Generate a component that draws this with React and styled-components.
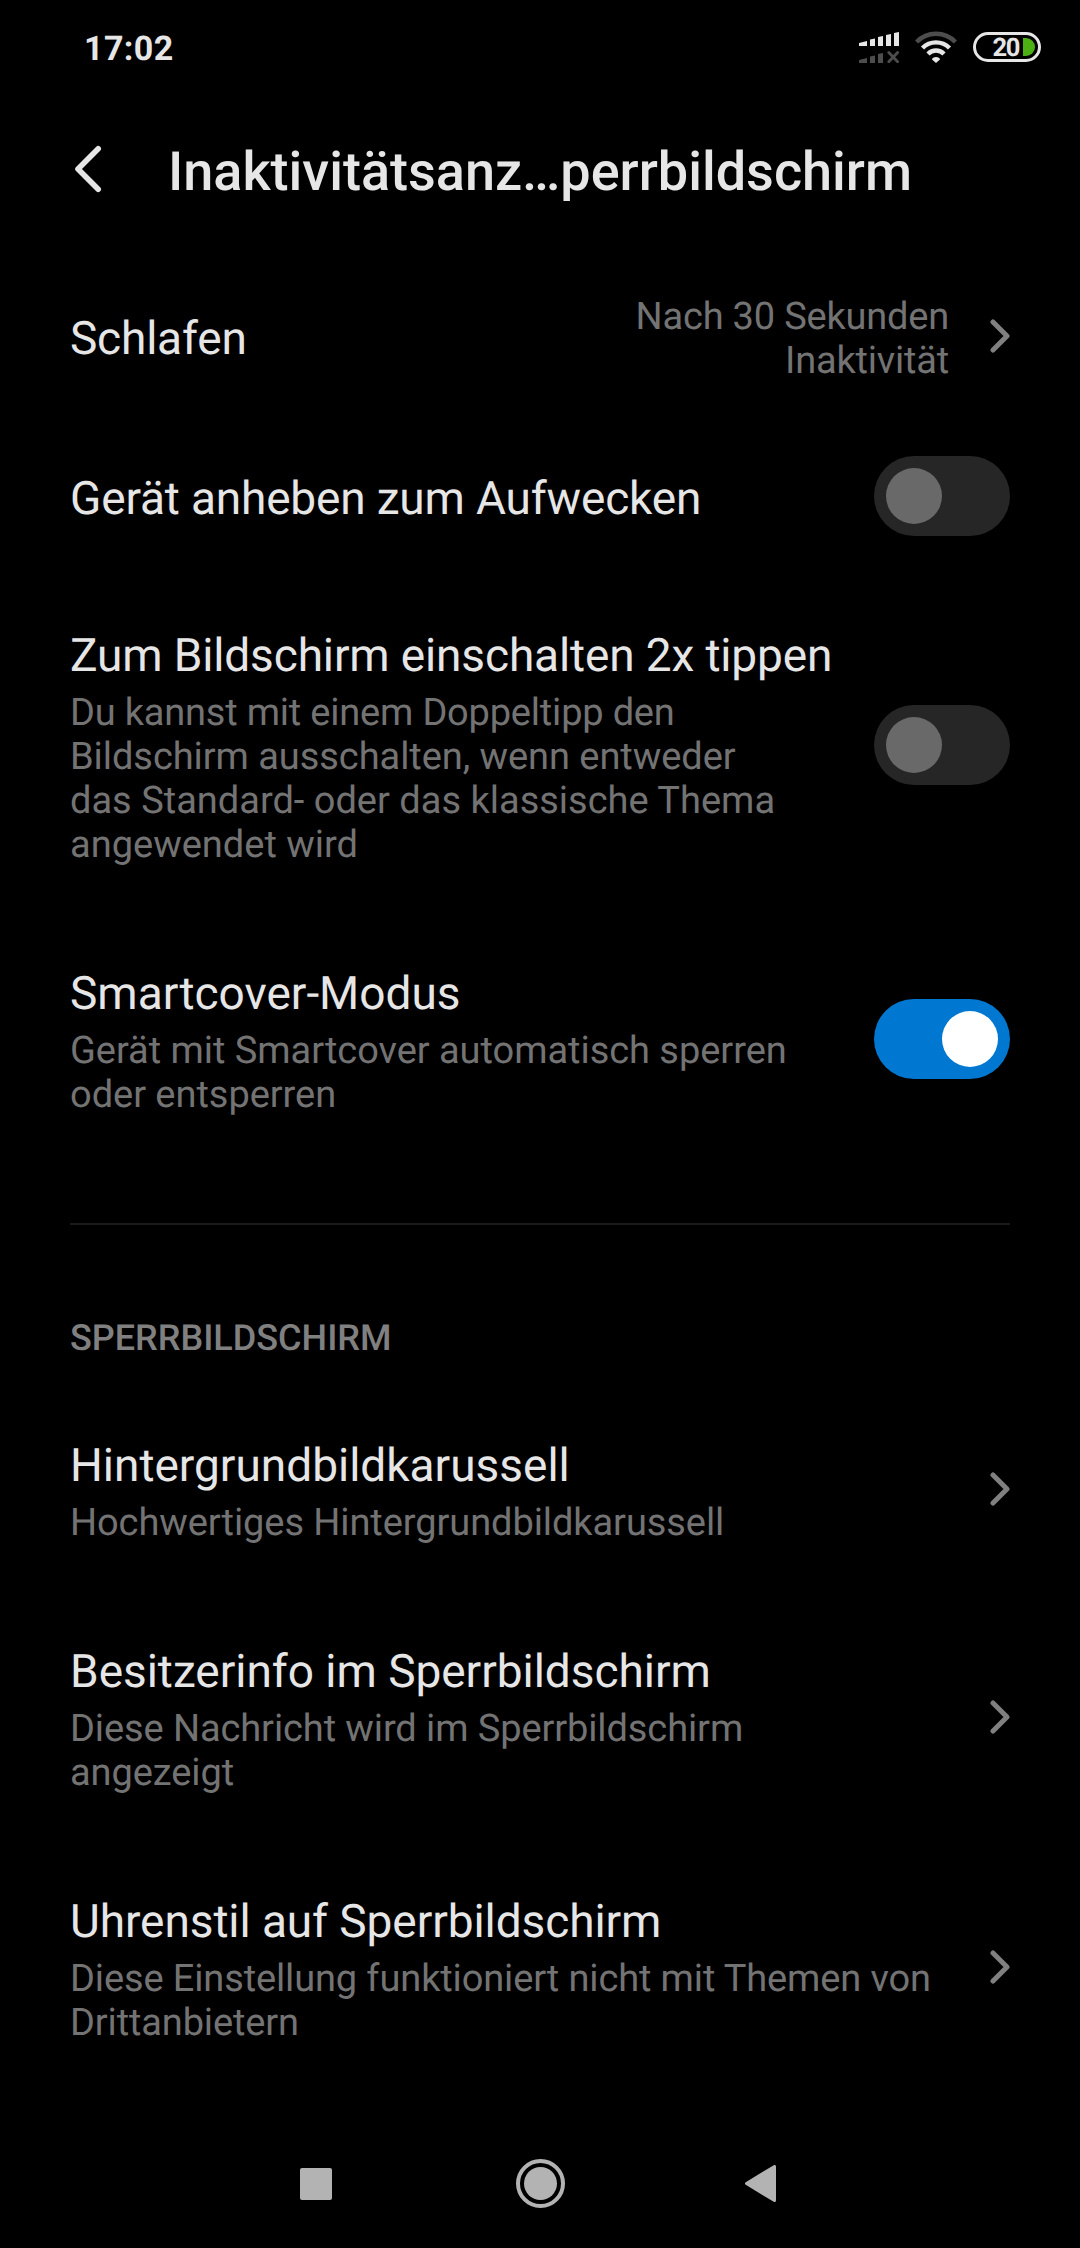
import React from 'react'
import styled, { createGlobalStyle } from 'styled-components'

const GlobalStyle = createGlobalStyle`
  body {
    margin: 0;
    background: #000;
    font-family: Roboto, sans-serif;
    text-rendering: geometricPrecision;
  }
`

const Screen = styled.div`
  display: flex;
  flex-direction: column;
  width: 1080px;
  height: 2248px;
  overflow: hidden;
  background: #000;
  color: #e6e6e6;
`

const StatusBar = styled.header`
  display: flex;
  align-items: center;
  justify-content: space-between;
  height: 96px;
  padding: 0 39px 2px 84px;
  box-sizing: border-box;
`

const Clock = styled.time`
  padding-top: 3px;
  font-size: 34px;
  font-weight: 700;
  letter-spacing: 0.4px;
`

const StatusIcons = styled.div`
  display: flex;
  align-items: center;
  gap: 16px;
`

const TitleBar = styled.div`
  display: flex;
  align-items: center;
  height: 152px;
  padding-left: 74px;
  gap: 66px;

  svg {
    margin-bottom: 6px;
  }
`

const Title = styled.h1`
  margin: 0;
  padding-top: 2px;
  font-size: 54px;
  font-weight: 500;
  line-height: 64px;
`

const List = styled.main`
  flex: 1;
  padding: 0 70px;
`

const Row = styled.div`
  display: flex;
  align-items: center;
  justify-content: space-between;
  box-sizing: border-box;
  height: ${({ $height }) => $height}px;
`

const Texts = styled.div`
  padding-top: 6px;
`

const RowTitle = styled.div`
  font-size: 46px;
  line-height: 54px;
  letter-spacing: ${({ $track }) => $track || 0}px;
  white-space: nowrap;
`

const Summary = styled.div`
  max-width: ${({ $wide }) => ($wide ? 880 : 730)}px;
  margin-top: 8px;
  font-size: 38px;
  line-height: 44px;
  letter-spacing: ${({ $track }) => $track || 0}px;
  color: #737373;
`

const Tight = styled.span`
  letter-spacing: ${({ $track }) => $track}px;
`

const Value = styled.div`
  width: 330px;
  margin: 0 41px 0 auto;
  padding-top: 6px;
  font-size: 38px;
  line-height: 44px;
  letter-spacing: -0.2px;
  text-align: right;
  color: #737373;
`

const Track = styled.div`
  display: flex;
  justify-content: ${({ $on }) => ($on ? 'flex-end' : 'flex-start')};
  width: 136px;
  height: 80px;
  padding: 12px;
  box-sizing: border-box;
  border-radius: 40px;
  background: ${({ $on }) => ($on ? '#0077d0' : '#262626')};
`

const Thumb = styled.div`
  width: 56px;
  height: 56px;
  border-radius: 50%;
  background: ${({ $on }) => ($on ? '#fff' : '#696969')};
`

const Divider = styled.hr`
  height: 2px;
  margin: 67px 0 0;
  border: 0;
  background: #1a1a1a;
`

const SectionTitle = styled.h2`
  margin: 0;
  padding: 92px 0 27px;
  font-size: 36px;
  font-weight: 500;
  line-height: 42px;
  color: #808080;
`

const NavBar = styled.nav`
  display: flex;
  justify-content: space-between;
  align-items: center;
  height: 129px;
  padding: 0 304px 0 300px;
`

const HomeIcon = styled.svg`
  margin-left: 4px;
`

const Toggle = ({ on }) => (
  <Track $on={on} role="switch" aria-checked={!!on}>
    <Thumb $on={on} />
  </Track>
)

const Chevron = () => (
  <svg width="20" height="34" viewBox="0 0 20 34" fill="none">
    <path d="M3 3L17 17L3 31" stroke="#808080" strokeWidth="5" strokeLinecap="round" strokeLinejoin="round" />
  </svg>
)

const BackIcon = () => (
  <svg width="28" height="48" viewBox="0 0 28 48" fill="none">
    <path d="M24.2 3.8L4 24L24.2 44.2" stroke="#e6e6e6" strokeWidth="5.6" strokeLinecap="round" strokeLinejoin="round" />
  </svg>
)

const SignalIcon = () => (
  <svg width="40" height="32" viewBox="0 0 40 32">
    <path
      d="M0 12L8 10V15H0ZM11 8.5L16 7.5V15H11ZM19 6L24 5V15H19ZM27 4L32 3V15H27ZM35 2L40 1V15H35Z"
      fill="#e6e6e6"
    />
    <path d="M0 29L8 27V32H0ZM11 25.5L16 24.5V32H11ZM19 23L24 22V32H19Z" fill="#4d4d4d" />
    <path d="M29.8 21.5L38.6 30.7M38.6 21.5L29.8 30.7" stroke="#4d4d4d" strokeWidth="2.8" strokeLinecap="round" />
  </svg>
)

const WifiIcon = () => (
  <svg width="42" height="32" viewBox="0 0 42 32" fill="none" strokeWidth="4.4">
    <path d="M1.6 11A27 27 0 0 1 40.4 11" stroke="#4d4d4d" />
    <path d="M7.5 17A19 19 0 0 1 34.5 17" stroke="#e6e6e6" />
    <path d="M13 23A11 11 0 0 1 29 23" stroke="#e6e6e6" />
    <path d="M17 28.5C17 25 25 25 25 28.5L21 32Z" fill="#e6e6e6" />
  </svg>
)

const Battery = styled.div`
  display: flex;
  align-items: center;
  justify-content: flex-end;
  gap: 4px;
  width: 68px;
  height: 30px;
  padding-right: 3px;
  box-sizing: border-box;
  border: 3px solid #e6e6e6;
  border-radius: 15px;
`

const Percent = styled.span`
  padding-top: 1px;
  font-size: 25.5px;
  font-weight: 700;
  line-height: 24px;
  letter-spacing: -1.4px;
`

const Charge = styled.span`
  width: 12px;
  height: 18px;
  border-radius: 0 9px 9px 0;
  background: #4caf14;
`

const App = () => {
  return (
    <Screen>
      <GlobalStyle />
      <StatusBar>
        <Clock>17:02</Clock>
        <StatusIcons>
          <SignalIcon />
          <WifiIcon />
          <Battery>
            <Percent>20</Percent>
            <Charge />
          </Battery>
        </StatusIcons>
      </StatusBar>
      <TitleBar>
        <BackIcon />
        <Title>Inaktivitätsanz…perrbildschirm</Title>
      </TitleBar>
      <List>
        <Row $height={176}>
          <Texts>
            <RowTitle $track={-0.2}>Schlafen</RowTitle>
          </Texts>
          <Value>Nach 30 Sekunden Inaktivität</Value>
          <Chevron />
        </Row>
        <Row $height={144}>
          <Texts>
            <RowTitle $track={-0.17}>Gerät anheben zum Aufwecken</RowTitle>
          </Texts>
          <Toggle />
        </Row>
        <Row $height={354}>
          <Texts>
            <RowTitle $track={-0.14}>Zum Bildschirm einschalten 2x tippen</RowTitle>
            <Summary>
              <Tight $track={-0.2}>Du kannst mit einem Doppeltipp den</Tight>{' '}
              <Tight $track={-0.06}>Bildschirm ausschalten, wenn entweder</Tight> das Standard- oder das klassische Thema
              angewendet wird
            </Summary>
          </Texts>
          <Toggle />
        </Row>
        <Row $height={234}>
          <Texts>
            <RowTitle>Smartcover-Modus</RowTitle>
            <Summary $track={-0.04}>Gerät mit Smartcover automatisch sperren oder entsperren</Summary>
          </Texts>
          <Toggle on />
        </Row>
        <Divider />
        <SectionTitle>SPERRBILDSCHIRM</SectionTitle>
        <Row $height={206}>
          <Texts>
            <RowTitle>Hintergrundbildkarussell</RowTitle>
            <Summary $track={-0.08}>Hochwertiges Hintergrundbildkarussell</Summary>
          </Texts>
          <Chevron />
        </Row>
        <Row $height={250}>
          <Texts>
            <RowTitle $track={-0.03}>Besitzerinfo im Sperrbildschirm</RowTitle>
            <Summary $track={-0.1}>Diese Nachricht wird im Sperrbildschirm angezeigt</Summary>
          </Texts>
          <Chevron />
        </Row>
        <Row $height={250}>
          <Texts>
            <RowTitle $track={-0.08}>Uhrenstil auf Sperrbildschirm</RowTitle>
            <Summary $wide $track={-0.13}>
              Diese Einstellung funktioniert nicht mit Themen von Drittanbietern
            </Summary>
          </Texts>
          <Chevron />
        </Row>
      </List>
      <NavBar>
        <svg width="32" height="32">
          <rect width="32" height="32" rx="2" fill="#b3b3b3" />
        </svg>
        <HomeIcon width="49" height="49" viewBox="0 0 49 49">
          <circle cx="24.5" cy="24.5" r="22.5" fill="none" stroke="#b3b3b3" strokeWidth="4" />
          <circle cx="24.5" cy="24.5" r="16.5" fill="#b3b3b3" />
        </HomeIcon>
        <svg width="31" height="37" viewBox="0 0 31 37">
          <path d="M1.5 18.5L29.5 1.5V35.5Z" fill="#b3b3b3" stroke="#b3b3b3" strokeWidth="3" strokeLinejoin="round" />
        </svg>
      </NavBar>
    </Screen>
  )
}

export default App
